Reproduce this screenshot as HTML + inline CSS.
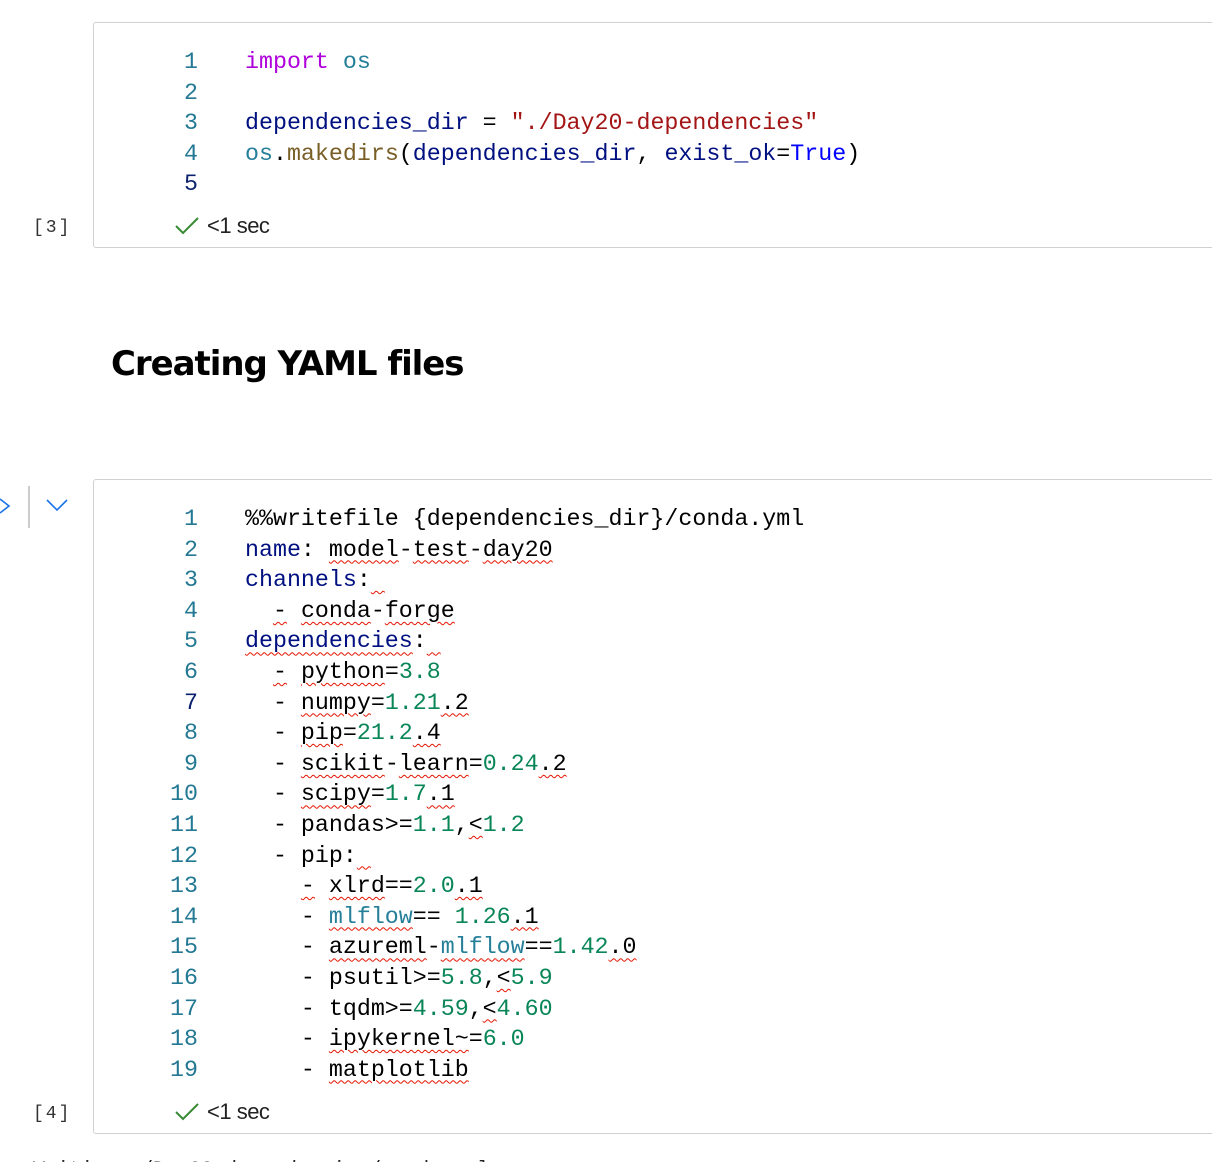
<!DOCTYPE html>
<html><head><meta charset="utf-8"><style>
html,body{margin:0;padding:0;background:#fff;width:1212px;height:1162px;overflow:hidden;position:relative}
.cell{position:absolute;left:93px;width:1130px;border:1px solid #d0d0d0;border-radius:3px;background:#fff}
.code{position:absolute;font-family:"Liberation Mono",monospace;font-size:23.3px;line-height:30.6px;white-space:pre;color:#000}
.ln{position:absolute;left:140px;width:58px;text-align:right;font-family:"Liberation Mono",monospace;font-size:23.3px;line-height:30.6px;color:#237893}
.ln .c{color:#0b216f}
.k{color:#af00db}.m{color:#267f99}.v{color:#001080}.s{color:#a31515}.f{color:#795e26}.n{color:#098658}.b{color:#0000ff}
.w{text-decoration:underline wavy #e51400;text-decoration-thickness:1px;text-underline-offset:4px}
.st{position:absolute;font-family:"Liberation Sans",sans-serif;font-size:22px;color:#222;letter-spacing:-0.5px}
.cnt{position:absolute;left:33px;font-family:"Liberation Mono",monospace;font-size:18px;color:#333;letter-spacing:2px}
h1{position:absolute;left:111px;top:344px;margin:0;font-family:"DejaVu Sans","Liberation Sans",sans-serif;font-weight:bold;font-size:34px;letter-spacing:-1.05px;color:#000}
</style></head><body>

<div class="cell" style="top:22px;height:224px"></div>
<div class="ln" style="top:47px">1<br>2<br>3<br>4<br><span class="c">5</span></div>
<div class="code" style="left:245px;top:47px"><span class="k">import</span> <span class="m">os</span>

<span class="v">dependencies_dir</span> = <span class="s">"./Day20-dependencies"</span>
<span class="m">os</span>.<span class="f">makedirs</span>(<span class="v">dependencies_dir</span>, <span class="v">exist_ok</span>=<span class="b">True</span>)
</div>
<svg style="position:absolute;left:174px;top:216px" width="26" height="20" viewBox="0 0 26 20"><path d="M2 10 L9 17 L24 2" fill="none" stroke="#388a34" stroke-width="2"/></svg>
<div class="st" style="left:207px;top:213px">&lt;1 sec</div>
<div class="cnt" style="top:218px">[3]</div>

<h1>Creating YAML files</h1>

<svg style="position:absolute;left:0;top:496px" width="12" height="20" viewBox="0 0 12 20"><path d="M0 3 L9 10 L0 17" fill="none" stroke="#1a73e8" stroke-width="1.6"/></svg>
<div style="position:absolute;left:28px;top:486px;width:2px;height:42px;background:#ccc"></div>
<svg style="position:absolute;left:45px;top:498px" width="24" height="14" viewBox="0 0 24 14"><path d="M2 2 L12 12 L22 2" fill="none" stroke="#1a73e8" stroke-width="1.6"/></svg>

<div class="cell" style="top:479px;height:653px"></div>
<div class="ln" style="top:504px">1<br>2<br>3<br>4<br>5<br>6<br><span class="c">7</span><br>8<br>9<br>10<br>11<br>12<br>13<br>14<br>15<br>16<br>17<br>18<br>19</div>
<div class="code" style="left:245px;top:504px">%%writefile {dependencies_dir}/conda.yml
<span class="v">name</span>: <span class="w">model</span>-<span class="w">test</span>-<span class="w">day20</span>
<span class="v">channels</span>:<span class="w"> </span>
  <span class="w">-</span> <span class="w">conda</span>-<span class="w">forge</span>
<span class="v w">dependencies</span>:<span class="w"> </span>
  <span class="w">-</span> <span class="w">python</span>=<span class="n">3.8</span>
  - <span class="w">numpy</span>=<span class="n">1.21</span><span class="w">.2</span>
  - <span class="w">pip</span>=<span class="n">21.2</span><span class="w">.4</span>
  - <span class="w">scikit</span>-<span class="w">learn</span>=<span class="n">0.24</span><span class="w">.2</span>
  - <span class="w">scipy</span>=<span class="n">1.7</span><span class="w">.1</span>
  - pandas&gt;=<span class="n">1.1</span>,<span class="w">&lt;</span><span class="n">1.2</span>
  - pip:<span class="w"> </span>
    <span class="w">-</span> <span class="w">xlrd</span>==<span class="n">2.0</span><span class="w">.1</span>
    - <span class="m w">mlflow</span>== <span class="n">1.26</span><span class="w">.1</span>
    - <span class="w">azureml</span>-<span class="m w">mlflow</span>==<span class="n">1.42</span><span class="w">.0</span>
    - psutil&gt;=<span class="n">5.8</span>,<span class="w">&lt;</span><span class="n">5.9</span>
    - tqdm&gt;=<span class="n">4.59</span>,<span class="w">&lt;</span><span class="n">4.60</span>
    - <span class="w">ipykernel~</span>=<span class="n">6.0</span>
    - <span class="w">matplotlib</span></div>
<svg style="position:absolute;left:174px;top:1102px" width="26" height="20" viewBox="0 0 26 20"><path d="M2 10 L9 17 L24 2" fill="none" stroke="#388a34" stroke-width="2"/></svg>
<div class="st" style="left:207px;top:1099px">&lt;1 sec</div>
<div class="cnt" style="top:1104px">[4]</div>

<div class="code" style="left:33px;top:1156px;font-size:20px;color:#222">Writing ./Day20-dependencies/conda.yml</div>
</body></html>
